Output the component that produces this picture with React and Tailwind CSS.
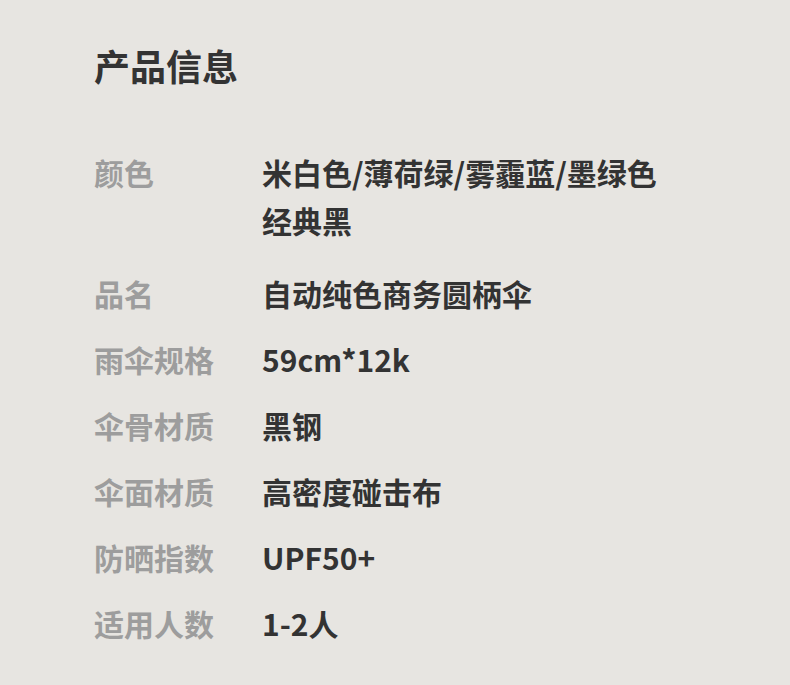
const specs = [
  { label: '品名', value: '自动纯色商务圆柄伞' },
  { label: '雨伞规格', value: '59cm*12k' },
  { label: '伞骨材质', value: '黑钢' },
  { label: '伞面材质', value: '高密度碰击布' },
  { label: '防晒指数', value: 'UPF50+' },
  { label: '适用人数', value: '1-2人' },
];

function SpecRow({ label, children, className = '' }) {
  return (
    <div className={`flex ${className}`}>
      <div className="w-[168px] shrink-0 text-[30px] leading-[48px] font-bold text-[#9d9d9d]">
        {label}
      </div>
      <div className="w-[410px] text-[30px] leading-[48px] font-bold text-[#333333]">
        {children}
      </div>
    </div>
  );
}

export default function App() {
  return (
    <div
      className="min-h-screen w-full bg-[#e7e5e1] pl-[94px] pt-[41px]"
      style={{ fontFamily: '"Noto Sans CJK SC", "Noto Sans", sans-serif' }}
    >
      <h2 className="text-[36px] leading-[48px] font-bold text-[#333333]">产品信息</h2>

      <div className="mt-[59px] flex flex-col gap-[18px]">
        <SpecRow label="颜色" className="mb-[7px]">
          米白色/薄荷绿/雾霾蓝/墨绿色
          <br />
          经典黑
        </SpecRow>
        {specs.map((s) => (
          <SpecRow key={s.label} label={s.label}>
            {s.value}
          </SpecRow>
        ))}
      </div>
    </div>
  );
}
